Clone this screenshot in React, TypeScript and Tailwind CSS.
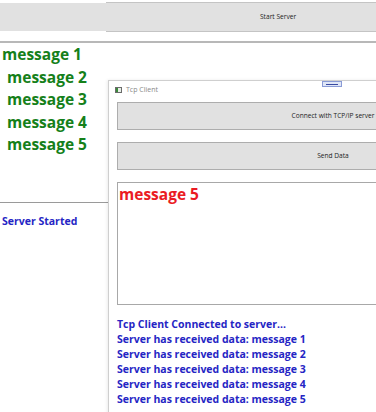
const serverMessages = ['message 1', 'message 2', 'message 3', 'message 4', 'message 5'];

const clientLog = [
  'Tcp Client Connected to server...',
  'Server has received data: message 1',
  'Server has received data: message 2',
  'Server has received data: message 3',
  'Server has received data: message 4',
  'Server has received data: message 5',
];

function ClientWindow() {
  return (
    <div className="absolute left-[108px] top-[80px] w-[448px] h-[340px] bg-white border-l border-t border-[#cfcfcf] shadow-[-1px_0_3px_rgba(0,0,0,0.08)]">
      {/* Title bar */}
      <div className="relative h-[21px] flex items-start gap-[4px] pl-[6px] pt-[5px]">
        <div className="w-[7px] h-[6px] mt-[1px] border border-[#6b6b6b] bg-[#e8f0e8] flex">
          <div className="w-[2px] h-full bg-[#3a8a3a]" />
        </div>
        <span className="text-[7px] leading-[8px] text-[#8a8a8a]">Tcp Client</span>
        <div className="absolute left-[213px] top-[0px] w-[20px] h-[6px] bg-[#dfe6f7] border border-[#8a9bd6] flex items-center justify-center">
          <div className="w-[12px] h-px bg-[#3a4aa0]" />
        </div>
      </div>

      <div className="flex flex-col px-[8px]">
        <button className="h-[28px] w-[432px] bg-[#e1e1e1] border border-[#adadad] text-[6.6px] text-[#222]">
          Connect with TCP/IP server
        </button>
        <button className="mt-[12px] h-[28px] w-[432px] bg-[#e1e1e1] border border-[#adadad] text-[6.6px] text-[#222]">
          Send Data
        </button>
        <div className="mt-[12px] h-[123px] w-[432px] border border-[#a8a8a8] px-[1px]">
          <div className="text-[15.5px] font-bold leading-[22px] text-[#ea1b23]">message 5</div>
        </div>
        <div className="mt-[12px] flex flex-col">
          {clientLog.map((line) => (
            <div key={line} className="text-[10.5px] font-bold leading-[15px] text-[#2525c4]">
              {line}
            </div>
          ))}
        </div>
      </div>
    </div>
  );
}

export default function App() {
  return (
    <div className="relative w-[376px] h-[412px] overflow-hidden bg-white font-['Open_Sans',sans-serif]">
      {/* Server window */}
      <div className="flex">
        <div className="w-[106px] mt-[3px] h-[28px] bg-[#e1e1e1]" />
        <div className="flex-1 mt-[2px] h-[30px] bg-[#e1e1e1] border-t border-b border-[#c4c4c4] flex items-center pl-[154px]">
          <span className="text-[6.6px] text-[#222]">Start Server</span>
        </div>
      </div>
      <div className="mt-[9px] h-[2px] bg-[#b8b8b8]" />

      <div className="w-[108px] flex flex-col">
        {serverMessages.map((m, i) => (
          <div
            key={m}
            className={`text-[15.5px] font-bold leading-[22.5px] text-[#15801a] ${i === 0 ? 'pl-[2px]' : 'pl-[7px]'}`}
          >
            {m}
          </div>
        ))}
        <div className="mt-[46px] h-px bg-[#9a9a9a]" />
        <div className="mt-[11px] pl-[2px] text-[10.5px] font-bold leading-[14px] text-[#2525c4]">
          Server Started
        </div>
      </div>

      <ClientWindow />
    </div>
  );
}
